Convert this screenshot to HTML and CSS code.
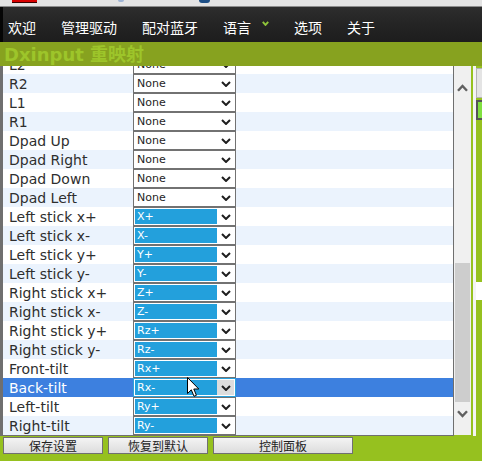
FILE: index.html
```html
<!DOCTYPE html>
<html lang="zh">
<head>
<meta charset="utf-8">
<title>Dxinput 重映射</title>
<link rel="stylesheet" href="styles.css">
</head>
<body>
<div class="topbar">
  <span class="tb-red"></span>
  <span class="tb-blue1"></span>
  <span class="tb-blue2"></span>
</div>
<nav class="nav">
  <span>欢迎</span>
  <span>管理驱动</span>
  <span>配对蓝牙</span>
  <span class="nav-lang">语言<svg class="nav-chev" width="7" height="5" viewBox="0 0 7 5"><polyline points="0.8,0.8 3.5,3.9 6.2,0.8" fill="none" stroke="#8fc43a" stroke-width="1.9"/></svg></span>
  <span>选项</span>
  <span>关于</span>
</nav>
<div class="title">Dxinput 重映射</div>
<div class="main">
  <div class="listwrap">
    <div class="list">
      <div class="rows">
        <div class="row"><span class="label">L2</span><span class="sel"><span class="sel-text">None</span><span class="sel-arrow"><svg class="chev" width="10" height="6" viewBox="0 0 10 6"><polyline points="1,1 5,5 9,1" fill="none" stroke="#1e1e1e" stroke-width="2"/></svg></span></span></div>
        <div class="row"><span class="label">R2</span><span class="sel"><span class="sel-text">None</span><span class="sel-arrow"><svg class="chev" width="10" height="6" viewBox="0 0 10 6"><polyline points="1,1 5,5 9,1" fill="none" stroke="#1e1e1e" stroke-width="2"/></svg></span></span></div>
        <div class="row"><span class="label">L1</span><span class="sel"><span class="sel-text">None</span><span class="sel-arrow"><svg class="chev" width="10" height="6" viewBox="0 0 10 6"><polyline points="1,1 5,5 9,1" fill="none" stroke="#1e1e1e" stroke-width="2"/></svg></span></span></div>
        <div class="row"><span class="label">R1</span><span class="sel"><span class="sel-text">None</span><span class="sel-arrow"><svg class="chev" width="10" height="6" viewBox="0 0 10 6"><polyline points="1,1 5,5 9,1" fill="none" stroke="#1e1e1e" stroke-width="2"/></svg></span></span></div>
        <div class="row"><span class="label">Dpad Up</span><span class="sel"><span class="sel-text">None</span><span class="sel-arrow"><svg class="chev" width="10" height="6" viewBox="0 0 10 6"><polyline points="1,1 5,5 9,1" fill="none" stroke="#1e1e1e" stroke-width="2"/></svg></span></span></div>
        <div class="row"><span class="label">Dpad Right</span><span class="sel"><span class="sel-text">None</span><span class="sel-arrow"><svg class="chev" width="10" height="6" viewBox="0 0 10 6"><polyline points="1,1 5,5 9,1" fill="none" stroke="#1e1e1e" stroke-width="2"/></svg></span></span></div>
        <div class="row"><span class="label">Dpad Down</span><span class="sel"><span class="sel-text">None</span><span class="sel-arrow"><svg class="chev" width="10" height="6" viewBox="0 0 10 6"><polyline points="1,1 5,5 9,1" fill="none" stroke="#1e1e1e" stroke-width="2"/></svg></span></span></div>
        <div class="row"><span class="label">Dpad Left</span><span class="sel"><span class="sel-text">None</span><span class="sel-arrow"><svg class="chev" width="10" height="6" viewBox="0 0 10 6"><polyline points="1,1 5,5 9,1" fill="none" stroke="#1e1e1e" stroke-width="2"/></svg></span></span></div>
        <div class="row"><span class="label">Left stick x+</span><span class="sel axis"><span class="sel-text">X+</span><span class="sel-arrow"><svg class="chev" width="10" height="6" viewBox="0 0 10 6"><polyline points="1,1 5,5 9,1" fill="none" stroke="#1e1e1e" stroke-width="2"/></svg></span></span></div>
        <div class="row"><span class="label">Left stick x-</span><span class="sel axis"><span class="sel-text">X-</span><span class="sel-arrow"><svg class="chev" width="10" height="6" viewBox="0 0 10 6"><polyline points="1,1 5,5 9,1" fill="none" stroke="#1e1e1e" stroke-width="2"/></svg></span></span></div>
        <div class="row"><span class="label">Left stick y+</span><span class="sel axis"><span class="sel-text">Y+</span><span class="sel-arrow"><svg class="chev" width="10" height="6" viewBox="0 0 10 6"><polyline points="1,1 5,5 9,1" fill="none" stroke="#1e1e1e" stroke-width="2"/></svg></span></span></div>
        <div class="row"><span class="label">Left stick y-</span><span class="sel axis"><span class="sel-text">Y-</span><span class="sel-arrow"><svg class="chev" width="10" height="6" viewBox="0 0 10 6"><polyline points="1,1 5,5 9,1" fill="none" stroke="#1e1e1e" stroke-width="2"/></svg></span></span></div>
        <div class="row"><span class="label">Right stick x+</span><span class="sel axis"><span class="sel-text">Z+</span><span class="sel-arrow"><svg class="chev" width="10" height="6" viewBox="0 0 10 6"><polyline points="1,1 5,5 9,1" fill="none" stroke="#1e1e1e" stroke-width="2"/></svg></span></span></div>
        <div class="row"><span class="label">Right stick x-</span><span class="sel axis"><span class="sel-text">Z-</span><span class="sel-arrow"><svg class="chev" width="10" height="6" viewBox="0 0 10 6"><polyline points="1,1 5,5 9,1" fill="none" stroke="#1e1e1e" stroke-width="2"/></svg></span></span></div>
        <div class="row"><span class="label">Right stick y+</span><span class="sel axis"><span class="sel-text">Rz+</span><span class="sel-arrow"><svg class="chev" width="10" height="6" viewBox="0 0 10 6"><polyline points="1,1 5,5 9,1" fill="none" stroke="#1e1e1e" stroke-width="2"/></svg></span></span></div>
        <div class="row"><span class="label">Right stick y-</span><span class="sel axis"><span class="sel-text">Rz-</span><span class="sel-arrow"><svg class="chev" width="10" height="6" viewBox="0 0 10 6"><polyline points="1,1 5,5 9,1" fill="none" stroke="#1e1e1e" stroke-width="2"/></svg></span></span></div>
        <div class="row"><span class="label">Front-tilt</span><span class="sel axis"><span class="sel-text">Rx+</span><span class="sel-arrow"><svg class="chev" width="10" height="6" viewBox="0 0 10 6"><polyline points="1,1 5,5 9,1" fill="none" stroke="#1e1e1e" stroke-width="2"/></svg></span></span></div>
        <div class="row hl"><span class="label">Back-tilt</span><span class="sel axis"><span class="sel-text">Rx-</span><span class="sel-arrow"><svg class="chev" width="10" height="6" viewBox="0 0 10 6"><polyline points="1,1 5,5 9,1" fill="none" stroke="#1e1e1e" stroke-width="2"/></svg></span></span></div>
        <div class="row"><span class="label">Left-tilt</span><span class="sel axis"><span class="sel-text">Ry+</span><span class="sel-arrow"><svg class="chev" width="10" height="6" viewBox="0 0 10 6"><polyline points="1,1 5,5 9,1" fill="none" stroke="#1e1e1e" stroke-width="2"/></svg></span></span></div>
        <div class="row"><span class="label">Right-tilt</span><span class="sel axis"><span class="sel-text">Ry-</span><span class="sel-arrow"><svg class="chev" width="10" height="6" viewBox="0 0 10 6"><polyline points="1,1 5,5 9,1" fill="none" stroke="#1e1e1e" stroke-width="2"/></svg></span></span></div>
      </div>
    </div>
    <div class="scroll">
      <svg class="sb-up" width="11" height="8" viewBox="0 0 11 8"><polyline points="1,6.8 5.5,2 10,6.8" fill="none" stroke="#606060" stroke-width="2.4"/></svg>
      <div class="thumb"></div>
      <svg class="sb-down" width="11" height="8" viewBox="0 0 11 8"><polyline points="1,1.2 5.5,6 10,1.2" fill="none" stroke="#606060" stroke-width="2.4"/></svg>
    </div>
  </div>
  <div class="side">
    <div class="side-inner">
      <div class="gbox"></div>
      <div class="nbox"></div>
      <div class="wband"></div>
    </div>
  </div>
</div>
<div class="buttons">
  <div class="btn b1">保存设置</div>
  <div class="btn b2">恢复到默认</div>
  <div class="btn b3">控制面板</div>
</div>
<svg class="cursor" width="13" height="21" viewBox="0 0 13 21"><polygon points="0.5,0.5 0.5,16.5 4.3,12.8 7,19.3 9.4,18.3 6.8,12 11.8,12" fill="#fff" stroke="#000" stroke-width="1" stroke-linejoin="miter"/></svg>
</body>
</html>
```

FILE: styles.css
```css
* { box-sizing: border-box; }

body {
  margin: 0;
  width: 482px;
  height: 461px;
  overflow: hidden;
  position: relative;
  background: #96c11f;
  font-family: "DejaVu Sans", "Noto Sans CJK SC", sans-serif;
}

/* strip of the window behind */
.topbar {
  height: 7px;
  background: #e3e3e3;
  border-bottom: 1px solid #8c8c8c;
  display: flex;
  align-items: flex-start;
}
.tb-red {
  width: 25px;
  height: 3px;
  margin-left: 12px;
  background: #d80000;
  border-bottom: 1px solid #3a0000;
}
.tb-blue1 {
  width: 6px;
  height: 2px;
  margin-left: 81px;
  background: #9fb4d4;
  border-radius: 0 0 3px 3px;
}
.tb-blue2 {
  width: 11px;
  height: 3px;
  margin-left: 75px;
  background: #1d4f86;
  border-radius: 0 0 5px 5px;
}

/* nav */
.nav {
  height: 35px;
  background: linear-gradient(#2d2d2d, #242424 50%, #1d1d1d);
  border-left: 3px solid #050505;
  display: flex;
  align-items: center;
  padding: 4px 0 0 5px;
  gap: 25px;
  color: #fff;
  font: 14px "Noto Sans CJK SC", sans-serif;
}
.nav-lang {
  display: flex;
  align-items: flex-start;
}
.nav-chev {
  margin-left: 11px;
  margin-top: 4px;
}

/* title */
.title {
  height: 24px;
  overflow: hidden;
  background: #87a21f;
  padding: 1px 0 0 4px;
  font: bold 18px/24px "DejaVu Sans", "Noto Sans CJK SC", sans-serif;
  color: #9dc52a;
  white-space: nowrap;
}

/* main */
.main {
  display: flex;
  height: 370px;
}
.listwrap {
  display: flex;
  border-left: 3px solid #6f6f6f;
}
.list {
  width: 451px;
  height: 370px;
  overflow: hidden;
  background: #fff;
  border-right: 1px solid #6f6f6f;
  border-bottom: 1px solid #6f6f6f;
}
.rows {
  margin-top: -11px;
}
.row {
  display: flex;
  height: 19px;
  background: #fff;
}
.row:nth-child(even) {
  background: #ebf3fd;
}
.row.hl {
  background: #3d80df;
}
.label {
  width: 130px;
  height: 19px;
  padding: 2px 0 0 6px;
  font-size: 14px;
  line-height: 17px;
  color: #2e2e2e;
  white-space: nowrap;
}
.hl .label {
  color: #fff;
}
.sel {
  width: 103px;
  height: 19px;
  border: 1px solid #727272;
  background: #fff;
  padding: 1px;
  display: flex;
}
.sel-text {
  flex: 0 0 82px;
  height: 15px;
  padding-left: 2px;
  font-size: 11px;
  line-height: 15px;
  color: #1e1e1e;
}
.sel.axis .sel-text {
  background: #23a0dc;
  color: #fff;
}
.sel-arrow {
  flex: 1;
  height: 15px;
  display: flex;
  align-items: center;
  justify-content: center;
  padding-left: 1px;
}
.hl .sel {
  border-color: #2aa2dc;
}
.hl .sel-arrow {
  background: #dddddd;
}

/* scrollbar */
.scroll {
  width: 17px;
  height: 369px;
  background: #f0f0f0;
  display: flex;
  flex-direction: column;
  align-items: center;
}
.sb-up {
  margin-top: 18px;
  flex: none;
}
.thumb {
  width: 15px;
  height: 139px;
  margin-top: 171px;
  background: #cdcdcd;
  flex: none;
}
.sb-down {
  margin-top: 8px;
  flex: none;
}

/* right edge */
.side {
  flex: 1;
  padding-left: 2px;
}
.side-inner {
  height: 100%;
  border-left: 3px solid #f4f4f4;
  padding-top: 2px;
}
.gbox {
  height: 30px;
  background: #e4e4e4;
  border: 1px solid #b4b4b4;
  border-right: none;
}
.nbox {
  height: 20px;
  margin-top: 2px;
  background: #80e040;
  border: 2px solid #555;
  border-right: none;
}
.wband {
  height: 18px;
  margin-top: 162px;
  background: #fff;
}

/* buttons */
.buttons {
  display: flex;
  padding-left: 3px;
  margin-top: 1px;
  gap: 5px;
}
.btn {
  height: 17px;
  border: 1px solid #707070;
  background: linear-gradient(#f4f4f4, #dcdcdc);
  font: 12px/15px "Noto Sans CJK SC", sans-serif;
  color: #222;
  display: flex;
  align-items: center;
  justify-content: center;
}
.b1 { width: 100px; }
.b2 { width: 100px; }
.b3 { width: 140px; }

/* mouse pointer over the list */
.cursor {
  position: absolute;
  left: 187px;
  top: 377px;
}
```
